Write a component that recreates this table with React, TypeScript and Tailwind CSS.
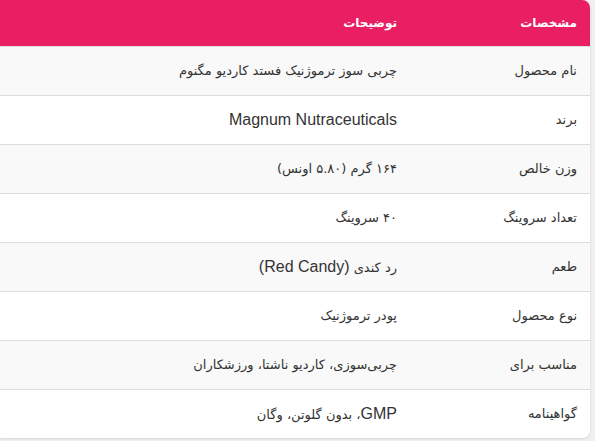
const rows: { label: string; value: React.ReactNode }[] = [
  { label: "نام محصول", value: "چربی سوز ترموژنیک فستد کاردیو مگنوم" },
  { label: "برند", value: <span className="latin">Magnum Nutraceuticals</span> },
  { label: "وزن خالص", value: "۱۶۴ گرم (۵.۸۰ اونس)" },
  { label: "تعداد سروینگ", value: "۴۰ سروینگ" },
  {
    label: "طعم",
    value: (
      <>
        رد کندی <span className="latin">(Red Candy)</span>
      </>
    ),
  },
  { label: "نوع محصول", value: "پودر ترموژنیک" },
  { label: "مناسب برای", value: "چربی‌سوزی، کاردیو ناشتا، ورزشکاران" },
  {
    label: "گواهینامه",
    value: (
      <>
        <span className="latin">GMP</span>، بدون گلوتن، وگان
      </>
    ),
  },
];

const Latin = "[&_.latin]:text-[16px] [&_.latin]:font-['Liberation_Sans',sans-serif]";

export default function App() {
  return (
    <div className="w-[595px] h-[441px] bg-[#f1f1f1] overflow-hidden">
      <div
        dir="rtl"
        className={`w-[590px] rounded-r-lg overflow-hidden bg-white shadow-[0_1px_3px_rgba(0,0,0,0.12)] text-[13px] text-[#333] font-['DejaVu_Sans',sans-serif] ${Latin}`}
      >
        <table className="w-full border-collapse">
          <thead>
            <tr className="bg-[#e91e63] text-white h-[46px]">
              <th className="w-[179px] text-right text-[12px] font-bold px-[13px]">مشخصات</th>
              <th className="text-right text-[12px] font-bold px-[14px]">توضیحات</th>
            </tr>
          </thead>
          <tbody>
            {rows.map((r, i) => (
              <tr
                key={r.label}
                className={`h-[49px] border-t border-[#dddddd] ${i % 2 === 0 ? "bg-[#f9f9f9]" : "bg-white"}`}
              >
                <td className="px-[13px] text-right align-middle">{r.label}</td>
                <td className="px-[14px] text-right align-middle">{r.value}</td>
              </tr>
            ))}
          </tbody>
        </table>
      </div>
    </div>
  );
}
